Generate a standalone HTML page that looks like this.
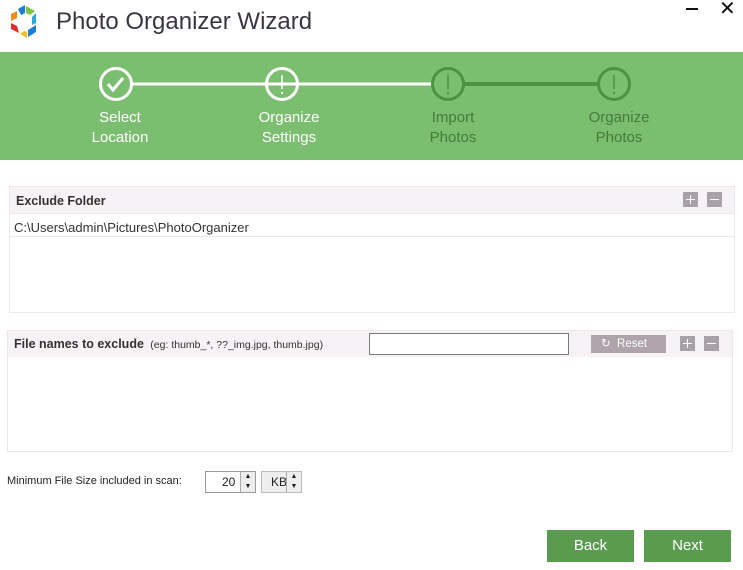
<!DOCTYPE html>
<html><head><style>
*{margin:0;padding:0;box-sizing:border-box}
body{width:743px;height:570px;background:#fff;font-family:"Liberation Sans",sans-serif;position:relative;overflow:hidden;color:#222}
.a{position:absolute}
.band{left:0;top:52px;width:743px;height:108px;background:#7bbe70}
.lbl{font-size:15px;text-align:center;width:110px;line-height:20px}
.w{color:#fff}.d{color:#457a3b}
.pb{width:15px;height:15px;background:#a9a1a6}
.pb:before{content:"";position:absolute;left:3px;top:7px;width:9px;height:1px;background:#fff}
.pl:after{content:"";position:absolute;left:7px;top:3px;width:1px;height:9px;background:#fff}
.btn{background:#5a9b50;color:#fff;font-size:15px;text-align:center;line-height:32px;width:87px;height:32px;top:530px}
.sp{width:15px;height:20px;background:#eee;border-left:1px solid #aaa;font-size:7px;text-align:center;line-height:10px}
</style></head><body>
<svg class="a" style="left:8px;top:5px" width="34" height="36" viewBox="0 0 32 36">
<polygon points="9,4 16,0 16,8 12,10" fill="#1e7bd6"/>
<polygon points="17,1 26,6 21,10 17,8" fill="#7cc243"/>
<polygon points="27,8 27,18 23,20 23,12" fill="#2aa8e0"/>
<polygon points="27,20 27,27 19,32 19,25" fill="#1e7bd6"/>
<polygon points="18,33 11,29 15,26 18,27" fill="#f7c21d"/>
<polygon points="10,28 2,24 2,18 8,21" fill="#e22b2b"/>
<polygon points="2,16 2,9 8,6 8,13" fill="#f28a1e"/>
</svg>
<div class="a" style="left:56px;top:8px;font-size:24px;color:#3a3540">Photo Organizer Wizard</div>
<div class="a" style="left:686px;top:8px;width:12px;height:2px;background:#111"></div>
<div class="a" style="left:719px;top:-4px;font-size:20px;color:#111">✕</div>
<div class="a band"></div>
<svg class="a" style="left:0;top:52px" width="743" height="70">
<line x1="132" y1="32" x2="432" y2="32" stroke="#fff" stroke-width="3"/>
<line x1="464" y1="32" x2="598" y2="32" stroke="#4f9144" stroke-width="4"/>
<circle cx="116" cy="32" r="15.5" fill="none" stroke="#fff" stroke-width="3"/>
<path d="M108 32 l5 6 l10 -12" fill="none" stroke="#fff" stroke-width="3"/>
<circle cx="282" cy="32" r="15.5" fill="none" stroke="#fff" stroke-width="3"/>
<line x1="282" y1="23" x2="282" y2="37" stroke="#fff" stroke-width="1.5"/><circle cx="282" cy="41" r="1.2" fill="#fff"/>
<circle cx="448" cy="32" r="15.5" fill="none" stroke="#4f9144" stroke-width="3"/>
<line x1="448" y1="23" x2="448" y2="37" stroke="#4f9144" stroke-width="1.5"/><circle cx="448" cy="41" r="1.2" fill="#4f9144"/>
<circle cx="614" cy="32" r="15.5" fill="none" stroke="#4f9144" stroke-width="3"/>
<line x1="614" y1="23" x2="614" y2="37" stroke="#4f9144" stroke-width="1.5"/><circle cx="614" cy="41" r="1.2" fill="#4f9144"/>
</svg>
<div class="a lbl w" style="left:65px;top:108px">Select<br>Location</div>
<div class="a lbl w" style="left:234px;top:108px">Organize<br>Settings</div>
<div class="a lbl d" style="left:398px;top:108px">Import<br>Photos</div>
<div class="a lbl d" style="left:564px;top:108px">Organize<br>Photos</div>

<div class="a" style="left:9px;top:186px;width:726px;height:127px;border:1px solid #ebe7ea"></div>
<div class="a" style="left:10px;top:187px;width:724px;height:27px;background:#f6f2f5;border-bottom:1px solid #ebe7ea"></div>
<div class="a" style="left:16px;top:194px;font-size:12.5px;font-weight:bold;color:#333">Exclude Folder</div>
<div class="a pb pl" style="left:683px;top:192px"></div>
<div class="a pb" style="left:707px;top:192px"></div>
<div class="a" style="left:10px;top:236px;width:724px;height:1px;background:#ebe7ea"></div>
<div class="a" style="left:14px;top:220px;font-size:13px;color:#333">C:\Users\admin\Pictures\PhotoOrganizer</div>

<div class="a" style="left:7px;top:330px;width:726px;height:122px;border:1px solid #ebe7ea"></div>
<div class="a" style="left:8px;top:331px;width:724px;height:26px;background:#f6f2f5"></div>
<div class="a" style="left:14px;top:337px;font-size:12.5px;font-weight:bold;color:#333">File names to exclude <span style="font-weight:normal;font-size:10.5px">&nbsp;(eg: thumb_*, ??_img.jpg, thumb.jpg)</span></div>
<div class="a" style="left:369px;top:333px;width:200px;height:22px;border:1px solid #7a7a7a;background:#fff"></div>
<div class="a" style="left:591px;top:335px;width:75px;height:18px;background:#aea4aa;color:#fff;font-size:11.5px;line-height:18px;padding-left:10px">↻ &nbsp;Reset</div>
<div class="a pb pl" style="left:680px;top:336px"></div>
<div class="a pb" style="left:704px;top:336px"></div>

<div class="a" style="left:7px;top:475px;font-size:11px;color:#222">Minimum File Size included in scan:</div>
<div class="a" style="left:205px;top:471px;width:51px;height:22px;border:1px solid #999;background:#fff"></div>
<div class="a" style="left:222px;top:475px;font-size:12px">20</div>
<div class="a sp" style="left:240px;top:472px">▲<br>▼</div>
<div class="a" style="left:261px;top:471px;width:41px;height:22px;border:1px solid #bbb;background:#eee"></div>
<div class="a" style="left:271px;top:475px;font-size:12px">KB</div>
<div class="a sp" style="left:286px;top:472px">▲<br>▼</div>

<div class="a btn" style="left:547px">Back</div>
<div class="a btn" style="left:644px">Next</div>
</body></html>
